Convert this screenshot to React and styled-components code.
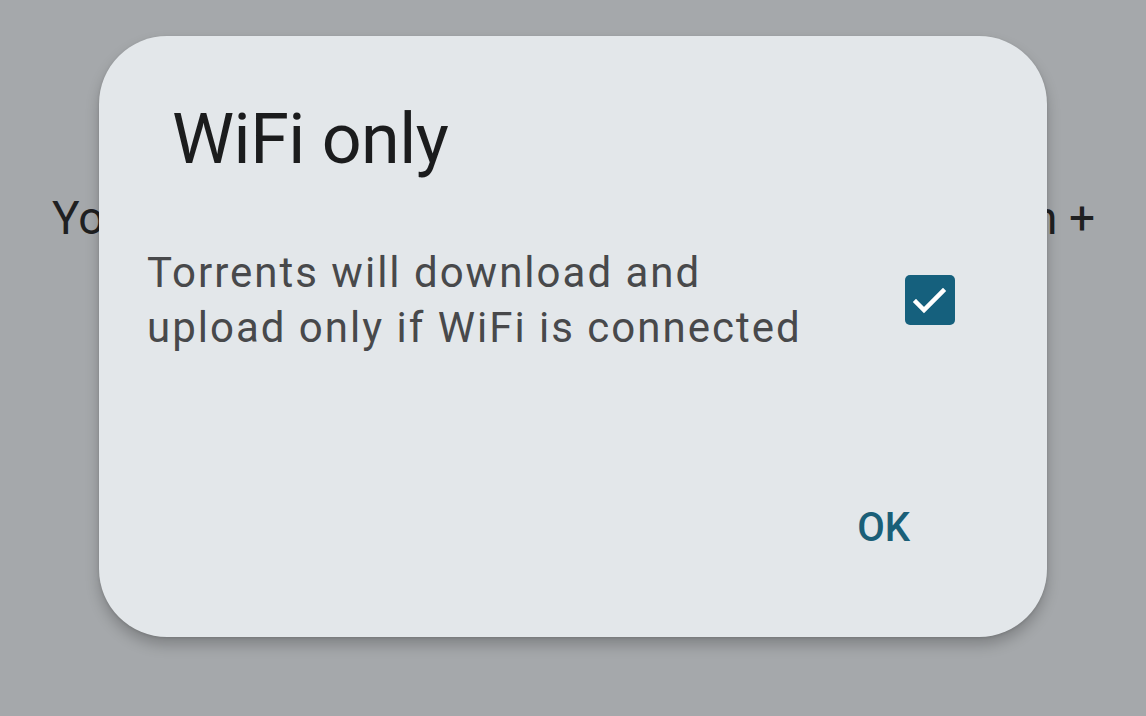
import styled, { createGlobalStyle } from 'styled-components'

const GlobalStyle = createGlobalStyle`
    html, body {
        margin: 0;
        padding: 0;
        background-color: #a5a8ab;
        font-family: Roboto, "Noto Sans", "Liberation Sans", sans-serif;
    }
`

const App = () => {
    return (
        <Page>
            <GlobalStyle />
            <BackgroundRow>
                <span>You can add torrents</span>
                <span>by tapping on +</span>
            </BackgroundRow>
            <Dialog>
                <Title>WiFi only</Title>
                <OptionRow>
                    <OptionText>
                        Torrents will download and<br />
                        upload only if WiFi is connected
                    </OptionText>
                    <CheckBox checked>
                        <svg width="50" height="50" viewBox="0 0 50 50">
                            <path d="M11 27 L19 35 L38 16" fill="none" stroke="#ffffff" strokeWidth="4.5" strokeLinecap="square" />
                        </svg>
                    </CheckBox>
                </OptionRow>
                <Actions>
                    <TextButton>OK</TextButton>
                </Actions>
            </Dialog>
        </Page>
    )
}

const Page = styled.div`
    position: relative;
    width: 1146px;
    height: 716px;
    overflow: hidden;
    background-color: #a5a8ab;
`

const BackgroundRow = styled.div`
    display: flex;
    justify-content: space-between;
    padding: 190px 51px 0 52px;
    font-size: 46px;
    line-height: 56px;
    color: #1f2021;
    white-space: nowrap;
`

const Dialog = styled.section`
    position: absolute;
    top: 36px;
    left: 99px;
    width: 948px;
    height: 601px;
    box-sizing: border-box;
    display: flex;
    flex-direction: column;
    padding: 63px 92px 85px 48px;
    background-color: #e3e7ea;
    border-radius: 68px;
    box-shadow: 0 8px 14px rgba(0, 0, 0, 0.22), 0 1px 3px rgba(0, 0, 0, 0.12);
`

const Title = styled.h2`
    margin: 0 0 0 25px;
    font-size: 70px;
    font-weight: 400;
    line-height: 80px;
    color: #1b1c1d;
    letter-spacing: -0.5px;
`

const OptionRow = styled.div`
    display: flex;
    align-items: center;
    justify-content: space-between;
    margin-top: 66px;
`

const OptionText = styled.p`
    margin: 0;
    font-size: 42px;
    line-height: 55px;
    letter-spacing: 2px;
    color: #48494b;
`

const CheckBox = styled.div`
    width: 50px;
    height: 50px;
    border-radius: 5px;
    background-color: ${props => props.checked ? '#15607d' : 'transparent'};
    border: ${props => props.checked ? 'none' : '3px solid #48494b'};
    svg {
        display: block;
    }
`

const Actions = styled.div`
    display: flex;
    justify-content: flex-end;
    margin-top: auto;
`

const TextButton = styled.button`
    margin-right: 45px;
    padding: 0;
    border: 0;
    background: none;
    font-family: inherit;
    font-size: 40px;
    font-weight: 500;
    line-height: 48px;
    color: #1a5f78;
`

export default App
